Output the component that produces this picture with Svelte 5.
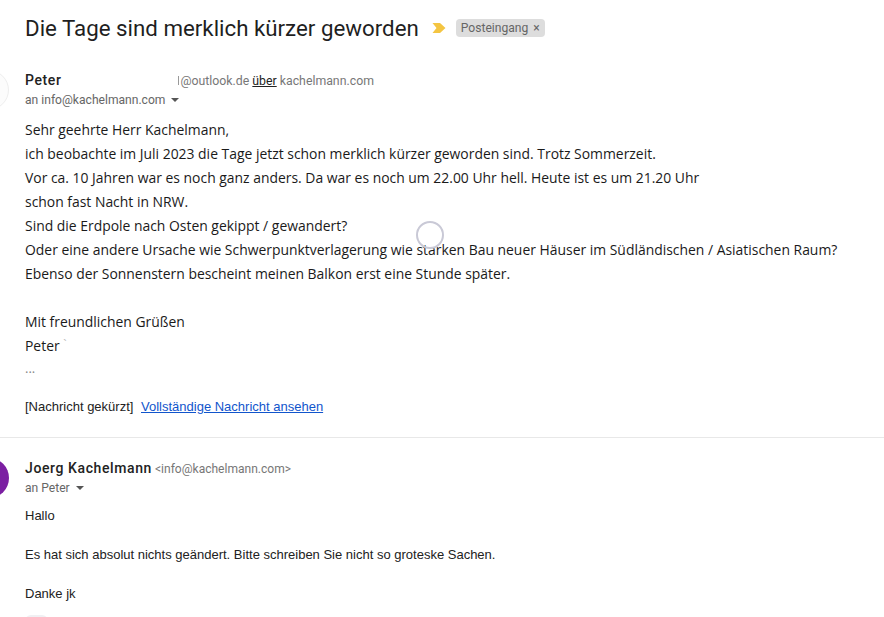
<script>
  const lines = [
    'Sehr geehrte Herr Kachelmann,',
    'ich beobachte im Juli 2023 die Tage jetzt schon merklich kürzer geworden sind. Trotz Sommerzeit.',
    'Vor ca. 10 Jahren war es noch ganz anders. Da war es noch um 22.00 Uhr hell. Heute ist es um 21.20 Uhr',
    'schon fast Nacht in NRW.',
    'Sind die Erdpole nach Osten gekippt / gewandert?',
    'Oder eine andere Ursache wie Schwerpunktverlagerung wie starken Bau neuer Häuser im Südländischen / Asiatischen Raum?',
    'Ebenso der Sonnenstern bescheint meinen Balkon erst eine Stunde später.',
    '',
    'Mit freundlichen Grüßen'
  ]
</script>

<main class="page">
  <header class="subject">
    <h1>Die Tage sind merklich kürzer geworden</h1>
    <svg class="marker" width="14" height="10" viewBox="0 0 14 10"><path d="M0.5 0h7.5l5.5 5-5.5 5H0.5l4-5z" fill="#f4c542" /></svg>
    <span class="label">Posteingang <i>×</i></span>
  </header>

  <section class="message first">
    <div class="head">
      <div class="avatar blank"></div>
      <div class="who">
        <div class="from"><b>Peter</b><span class="stub"></span><span class="addr masked">@outlook.de <u>über</u> kachelmann.com</span></div>
        <div class="to">an info@kachelmann.com <span class="caret"></span></div>
      </div>
    </div>
    <div class="body">
      {#each lines as line}
        <p>{line}</p>
      {/each}
      <p>Peter <span class="tick">`</span></p>
      <p class="dots">...</p>
    </div>
    <div class="clipped">[Nachricht gekürzt] <a href="#full">Vollständige Nachricht ansehen</a></div>
  </section>

  <section class="message second">
    <div class="head">
      <div class="avatar purple"></div>
      <div class="who">
        <div class="from"><b>Joerg Kachelmann</b><span class="addr plain">&lt;info@kachelmann.com&gt;</span></div>
        <div class="to">an Peter <span class="caret"></span></div>
      </div>
    </div>
    <div class="reply">
      <p>Hallo</p>
      <p>Es hat sich absolut nichts geändert. Bitte schreiben Sie nicht so groteske Sachen.</p>
      <p>Danke jk</p>
    </div>
    <div class="chip"></div>
  </section>

  <div class="spinner"></div>
</main>

<style>
  :global(body) {
    margin: 0;
    background: #fff;
  }
  .page {
    position: relative;
    width: 884px;
    height: 617px;
    overflow: hidden;
    font-family: Roboto, "Liberation Sans", sans-serif;
    color: #222;
  }
  .subject {
    display: flex;
    align-items: center;
    height: 28px;
    padding: 14px 0 0 25px;
  }
  h1 {
    margin: 0;
    font-size: 22.3px;
    font-weight: 400;
    color: #1f1f1f;
    white-space: nowrap;
  }
  .marker {
    margin-left: 13px;
  }
  .label {
    margin-left: 10px;
    padding: 0 5px;
    height: 18px;
    line-height: 18px;
    font-size: 12.1px;
    background: #ddd;
    color: #666;
    border-radius: 4px;
  }
  .label i {
    font-style: normal;
    margin-left: 2px;
  }
  .head {
    display: flex;
  }
  .avatar {
    flex: none;
    width: 40px;
    height: 40px;
    margin-left: -31px;
    margin-right: 16px;
    border-radius: 50%;
    box-sizing: border-box;
  }
  .blank {
    border: 1px solid #eee;
    background: #fcfcfc;
  }
  .purple {
    background: #7b1fa2;
  }
  .first {
    padding-top: 28px;
    height: 367px;
    border-bottom: 1px solid #e8e8e8;
  }
  .from {
    display: flex;
    align-items: baseline;
    height: 20px;
    line-height: 20px;
    font-size: 12.3px;
    color: #777;
    white-space: pre;
  }
  .from b {
    font-size: 14px;
    font-weight: 500;
    letter-spacing: 0.6px;
    color: #222;
  }
  .stub {
    width: 1px;
    height: 9px;
    margin-left: 117px;
    background: #999;
  }
  .masked {
    margin-left: 1px;
  }
  .plain {
    margin-left: 3px;
    font-size: 12.05px;
  }
  .addr u {
    color: #222;
  }
  .to {
    height: 20px;
    line-height: 20px;
    font-size: 12.1px;
    color: #666;
    white-space: nowrap;
  }
  .caret {
    display: inline-block;
    margin-left: 3px;
    vertical-align: 2px;
    border-left: 4px solid transparent;
    border-right: 4px solid transparent;
    border-top: 4px solid #555;
  }
  .body {
    padding: 8px 0 0 25px;
    font-family: "Open Sans", sans-serif;
    font-size: 13.92px;
    line-height: 24px;
    color: #1a1a1a;
  }
  .body p {
    margin: 0;
    height: 24px;
    white-space: nowrap;
  }
  .tick {
    color: #bbb;
    font-size: 12px;
    line-height: 0;
    vertical-align: 2px;
  }
  .dots {
    font-size: 13px;
    line-height: 20px;
    color: #888;
  }
  .clipped {
    padding: 15px 0 0 25px;
    font-family: "Liberation Sans", Arial, sans-serif;
    font-size: 13px;
    line-height: 20px;
    color: #222;
    white-space: pre;
  }
  .clipped a {
    margin-left: 4px;
    color: #15c;
  }
  .second {
    padding-top: 20px;
  }
  .reply {
    padding: 8px 0 0 25px;
    font-family: "Liberation Sans", Arial, sans-serif;
    font-size: 13px;
    line-height: 20px;
    color: #222;
  }
  .reply p {
    margin: 0 0 19px;
  }
  .chip {
    width: 23px;
    height: 12px;
    margin: -8px 0 0 25px;
    border-radius: 6px;
    background: #f0f0f3;
  }
  .spinner {
    position: absolute;
    left: 416px;
    top: 221px;
    width: 24px;
    height: 24px;
    border: 2px solid #c9c9d6;
    border-radius: 50%;
  }
</style>
